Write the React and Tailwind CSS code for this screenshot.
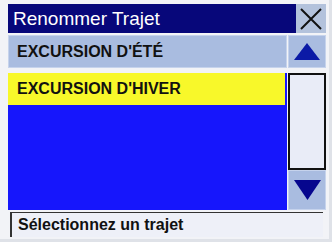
export default function App() {
  const font = { fontFamily: '"Liberation Sans", Arial, sans-serif' }

  return (
    <div className="w-[332px] h-[242px] bg-[#dfe2e8] overflow-hidden" style={font}>
      <div className="w-[329px] h-[239px] bg-[#f2f3f7] pl-[8px] pt-[4px] flex flex-col">
        {/* Header */}
        <div className="flex h-[29px] w-[318px]">
          <div className="w-[288px] bg-[#07077a] text-white text-[19px] leading-[29px] pl-[5px]">
            Renommer Trajet
          </div>
          <div className="w-[30px] bg-[#b3c2dc] flex items-center justify-center">
            <svg width="24" height="24" viewBox="0 0 24 24">
              <path d="M2 2 L22 22 M22 2 L2 22" stroke="#111" strokeWidth="2" fill="none" />
            </svg>
          </div>
        </div>

        {/* First row */}
        <div className="flex h-[33px] mt-[2px] w-[318px]">
          <div className="w-[279px] bg-[#a9bce0] border border-[#c6d3ec] text-[16px] font-bold text-[#111] leading-[31px] pl-[8px]">
            EXCURSION D'ÉTÉ
          </div>
          <div className="ml-[1px] w-[38px] bg-[#a9bce0] border border-[#c6d3ec] flex items-center justify-center">
            <svg width="26" height="17" viewBox="0 0 26 17">
              <polygon points="13,0 26,17 0,17" fill="#0b1aa6" />
            </svg>
          </div>
        </div>

        {/* List + scrollbar */}
        <div className="flex h-[137px] mt-[5px] w-[318px]">
          <div className="w-[279px] flex flex-col bg-[#1616fc]">
            <div className="h-[32px] mr-[2px] bg-[#f8f82a] text-[16px] font-bold text-[#111] leading-[32px] pl-[9px]">
              EXCURSION D'HIVER
            </div>
            <div className="flex-1" />
          </div>
          <div className="ml-[1px] w-[38px] flex flex-col">
            <div className="h-[97px] bg-[#e9ecf7] border-2 border-[#111]" />
            <div className="h-[40px] bg-[#a9bce0] border border-[#c6d3ec] flex items-center justify-center">
              <svg width="27" height="20" viewBox="0 0 27 20">
                <polygon points="0,0 27,0 13.5,20" fill="#06068e" />
              </svg>
            </div>
          </div>
        </div>

        {/* Status */}
        <div className="mt-[2px] ml-[2px] w-[313px] h-[25px] bg-[#eef0f8] border-l-2 border-t border-[#333] text-[16px] font-bold text-[#111] leading-[23px] pl-[6px]">
          Sélectionnez un trajet
        </div>
      </div>
    </div>
  )
}
